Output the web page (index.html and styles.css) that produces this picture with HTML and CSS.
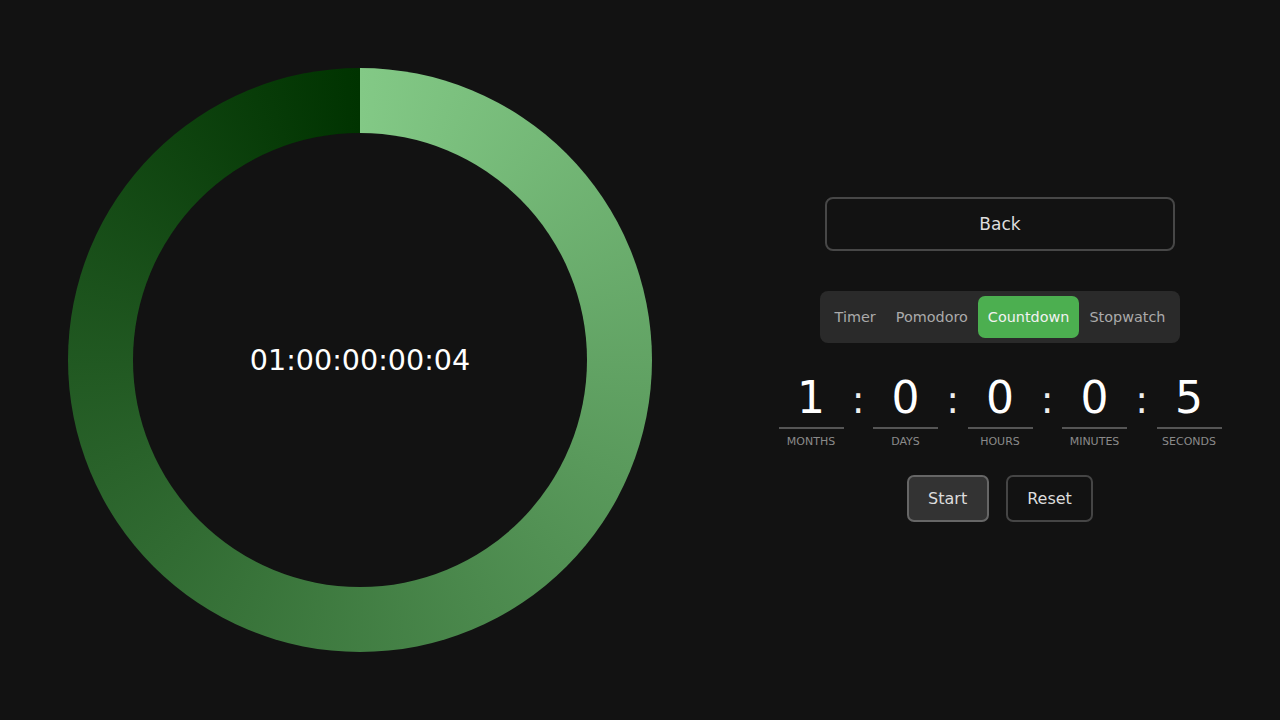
FILE: index.html
```html
<!DOCTYPE html>
<html lang="en">
<head>
<meta charset="utf-8">
<title>Countdown</title>
<link rel="stylesheet" href="styles.css">
</head>
<body>
<main class="app">
  <section class="left">
    <div class="ring">
      <div class="ring-inner">
        <span class="ring-time">01:00:00:00:04</span>
      </div>
    </div>
  </section>
  <section class="right">
    <button class="back">Back</button>
    <nav class="tabs">
      <span class="tab">Timer</span>
      <span class="tab">Pomodoro</span>
      <span class="tab active">Countdown</span>
      <span class="tab">Stopwatch</span>
    </nav>
    <div class="fields">
      <div class="unit"><div class="value">1</div><div class="label">Months</div></div>
      <div class="colon">:</div>
      <div class="unit"><div class="value">0</div><div class="label">Days</div></div>
      <div class="colon">:</div>
      <div class="unit"><div class="value">0</div><div class="label">Hours</div></div>
      <div class="colon">:</div>
      <div class="unit"><div class="value">0</div><div class="label">Minutes</div></div>
      <div class="colon">:</div>
      <div class="unit"><div class="value">5</div><div class="label">Seconds</div></div>
    </div>
    <div class="actions">
      <button class="btn btn-start">Start</button>
      <button class="btn btn-reset">Reset</button>
    </div>
  </section>
</main>
</body>
</html>
```
FILE: styles.css
```css
* { box-sizing: border-box; }
html, body { margin: 0; padding: 0; }
body {
  background: #121212;
  color: #ffffff;
  font-family: "DejaVu Sans", "Liberation Sans", sans-serif;
  width: 1280px;
  height: 720px;
  overflow: hidden;
}
.app {
  display: grid;
  grid-template-columns: 720px 560px;
  height: 720px;
}
.left {
  display: flex;
  align-items: center;
  justify-content: center;
}
.ring {
  width: 584px;
  height: 584px;
  border-radius: 50%;
  background: conic-gradient(#83c986 0deg, #003300 360deg);
  display: flex;
  align-items: center;
  justify-content: center;
}
.ring-inner {
  width: 454px;
  height: 454px;
  border-radius: 50%;
  background: #121212;
  display: flex;
  align-items: center;
  justify-content: center;
}
.ring-time {
  font-size: 28.6px;
  color: #ffffff;
}
.right {
  display: flex;
  flex-direction: column;
  align-items: center;
  justify-content: center;
  padding-bottom: 2px;
}
.back {
  width: 350px;
  height: 54px;
  background: transparent;
  border: 2px solid #474747;
  border-radius: 8px;
  color: #dddddd;
  font-family: inherit;
  font-size: 17px;
  margin-bottom: 40px;
}
.tabs {
  display: flex;
  background: #2a2a2a;
  border-radius: 8px;
  padding: 5px;
  height: 52px;
  margin-bottom: 29px;
}
.tab {
  display: flex;
  align-items: center;
  padding: 0 10px;
  height: 42px;
  font-size: 14.4px;
  color: #aaaaaa;
  border-radius: 7px;
}
.tab.active {
  background: #4caf50;
  color: #f2f2f2;
}
.fields {
  display: flex;
  align-items: baseline;
}
.unit {
  width: 65px;
  display: flex;
  flex-direction: column;
  align-items: center;
}
.value {
  width: 65px;
  text-align: center;
  font-size: 44px;
  line-height: 51px;
  padding-bottom: 4px;
  border-bottom: 2px solid #555555;
  color: #ffffff;
}
.label {
  margin-top: 6px;
  font-size: 11px;
  line-height: 13px;
  text-transform: uppercase;
  color: #8a8a8a;
}
.colon {
  width: 29.5px;
  text-align: center;
  font-size: 38px;
  line-height: 51px;
  color: #eeeeee;
}
.actions {
  display: flex;
  gap: 17px;
  margin-top: 27px;
}
.btn {
  height: 47px;
  padding: 0 19.5px;
  border-radius: 7px;
  font-family: inherit;
  font-size: 16px;
  color: #dddddd;
}
.btn-start {
  background: #333333;
  border: 2px solid #666666;
}
.btn-reset {
  background: transparent;
  border: 2px solid #454545;
}
```
